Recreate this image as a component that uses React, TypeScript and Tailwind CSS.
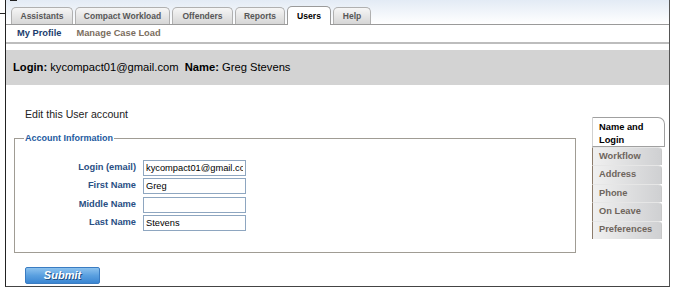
const tabs = [
  { label: 'Assistants', w: 'w-[62px]' },
  { label: 'Compact Workload', w: 'w-[95px]' },
  { label: 'Offenders', w: 'w-[61px]' },
  { label: 'Reports', w: 'w-[50px]' },
  { label: 'Users', w: 'w-[44px]', active: true },
  { label: 'Help', w: 'w-[38px]' },
]

const fields = [
  { label: 'Login (email)', value: 'kycompact01@gmail.com' },
  { label: 'First Name', value: 'Greg' },
  { label: 'Middle Name', value: '' },
  { label: 'Last Name', value: 'Stevens' },
]

const sideTabs = ['Workflow', 'Address', 'Phone', 'On Leave', 'Preferences']

const App = () => {
  return (
    <div className="relative w-[675px] h-[289px] bg-white overflow-hidden font-['Liberation_Sans',Arial,sans-serif]">
      {/* stray marks at the top-left edge */}
      <div className="absolute left-0 top-[13px] w-[5px] h-px bg-[#222]" />
      <div className="absolute left-[10px] top-0 w-[7px] h-px bg-[#222]" />

      <div className="ml-[5px] w-[665px] border-l border-l-[#222] border-r border-r-[#555] border-b border-b-[#444]">
        {/* main tabs */}
        <div className="h-[25px] flex items-end gap-[2px] pl-[5px] border-b border-[#9a9a9a] bg-gradient-to-b from-[#e3ebf5] to-white">
          {tabs.map((t) =>
            t.active ? (
              <div
                key={t.label}
                className={`${t.w} h-[19px] -mb-px flex items-center justify-center rounded-t-[5px] border border-b-0 border-[#9a9a9a] bg-white text-[8.6px] font-bold text-black`}
              >
                {t.label}
              </div>
            ) : (
              <div
                key={t.label}
                className={`${t.w} h-[17px] flex items-center justify-center rounded-t-[5px] border border-b-0 border-[#b0b0b0] bg-gradient-to-b from-[#f6f6f6] to-[#d6d6d6] text-[8.5px] font-bold text-[#575757]`}
              >
                {t.label}
              </div>
            )
          )}
        </div>

        {/* sub menu */}
        <div className="h-[19px] flex items-center gap-[15px] pl-[11px] border-b-2 border-[#bdbdbd] text-[9.3px] font-bold">
          <span className="text-[#1b3c6e]">My Profile</span>
          <span className="text-[#7b6e60]">Manage Case Load</span>
        </div>

        {/* login band */}
        <div className="mt-[6px] h-[35px] flex items-center pl-[7px] bg-[#d3d3d3] text-[11.2px] text-black">
          <b>Login:</b>
          <span>&nbsp;kycompact01@gmail.com&nbsp;&nbsp;</span>
          <b>Name:</b>
          <span>&nbsp;Greg Stevens</span>
        </div>

        <div className="flex items-start">
          <div className="flex flex-col">
            <div className="mt-[23px] ml-[19px] h-[12px] leading-[12px] text-[10.6px] text-[#222]">
              Edit this User account
            </div>

            <fieldset className="mt-[13px] ml-[8px] w-[562px] border border-[#a09c94] pb-[21px]">
              <legend className="ml-[9px] px-px text-[9px] leading-[11px] font-bold text-[#1d5aa0]">
                Account Information
              </legend>
              <div className="mt-[16px] flex flex-col gap-[2.4px]">
                {fields.map((f) => (
                  <div key={f.label} className="flex items-center gap-[7px]">
                    <label className="w-[121px] text-right text-[9.3px] font-bold text-[#2a4f84]">
                      {f.label}
                    </label>
                    <input
                      readOnly
                      value={f.value}
                      className="w-[103px] h-[16px] border border-[#8ea6c0] bg-white px-[2px] text-[9.3px] text-black outline-none font-['Liberation_Sans',Arial,sans-serif]"
                    />
                  </div>
                ))}
              </div>
            </fieldset>

            <div className="mt-[14px] mb-[2px] ml-[19px] w-[75px] h-[17px] flex items-center justify-center rounded-[2px] border border-[#3a7cc2] bg-gradient-to-b from-[#8cc2ee] via-[#5aa0e0] to-[#3a86d2] text-[11px] font-bold italic text-white [text-shadow:1px_1px_0_#1d4f86]">
              Submit
            </div>
          </div>

          {/* side tabs */}
          <div className="mt-[32px] ml-[16px] w-[73px] flex flex-col">
            <div className="h-[30px] pl-[6px] pt-[3px] rounded-tr-[7px] border border-[#a0a0a0] border-l-[#d0d0d0] bg-white text-[9.3px] leading-[12.5px] font-bold text-black">
              Name and
              <br />
              Login
            </div>
            {sideTabs.map((s) => (
              <div
                key={s}
                className="h-[18.4px] w-[70px] flex items-center pl-[6px] rounded-tr-[4px] border-l border-l-[#8c7c6c] border-r border-r-[#c8c8c8] border-t border-t-[#e6e6e6] bg-gradient-to-r from-[#f0f0f0] to-[#cfd0d2] text-[9.3px] font-bold text-[#6e655c]"
              >
                {s}
              </div>
            ))}
          </div>
        </div>
      </div>
    </div>
  )
}

export default App
